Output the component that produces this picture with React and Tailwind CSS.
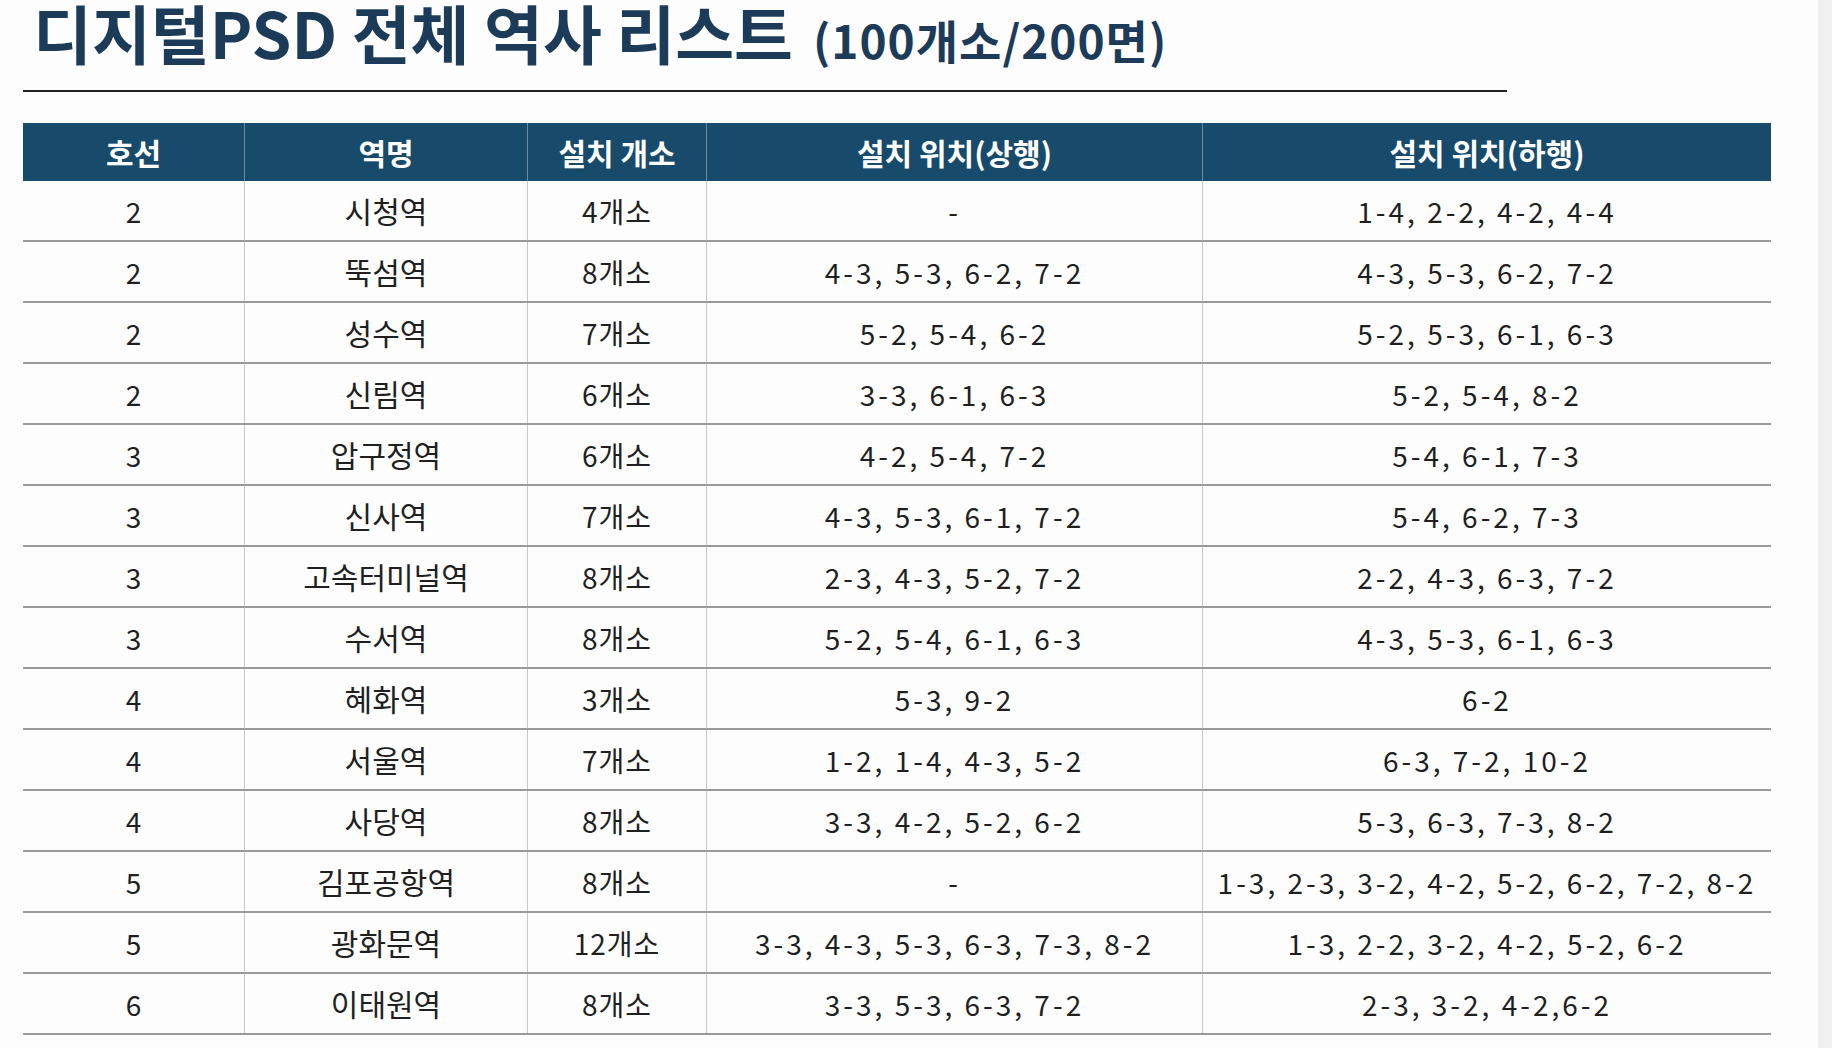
import React from 'react';

const rows = [
  ['2', '시청역', '4개소', '-', '1-4, 2-2, 4-2, 4-4'],
  ['2', '뚝섬역', '8개소', '4-3, 5-3, 6-2, 7-2', '4-3, 5-3, 6-2, 7-2'],
  ['2', '성수역', '7개소', '5-2, 5-4, 6-2', '5-2, 5-3, 6-1, 6-3'],
  ['2', '신림역', '6개소', '3-3, 6-1, 6-3', '5-2, 5-4, 8-2'],
  ['3', '압구정역', '6개소', '4-2, 5-4, 7-2', '5-4, 6-1, 7-3'],
  ['3', '신사역', '7개소', '4-3, 5-3, 6-1, 7-2', '5-4, 6-2, 7-3'],
  ['3', '고속터미널역', '8개소', '2-3, 4-3, 5-2, 7-2', '2-2, 4-3, 6-3, 7-2'],
  ['3', '수서역', '8개소', '5-2, 5-4, 6-1, 6-3', '4-3, 5-3, 6-1, 6-3'],
  ['4', '혜화역', '3개소', '5-3, 9-2', '6-2'],
  ['4', '서울역', '7개소', '1-2, 1-4, 4-3, 5-2', '6-3, 7-2, 10-2'],
  ['4', '사당역', '8개소', '3-3, 4-2, 5-2, 6-2', '5-3, 6-3, 7-3, 8-2'],
  ['5', '김포공항역', '8개소', '-', '1-3, 2-3, 3-2, 4-2, 5-2, 6-2, 7-2, 8-2'],
  ['5', '광화문역', '12개소', '3-3, 4-3, 5-3, 6-3, 7-3, 8-2', '1-3, 2-2, 3-2, 4-2, 5-2, 6-2'],
  ['6', '이태원역', '8개소', '3-3, 5-3, 6-3, 7-2', '2-3, 3-2, 4-2,6-2'],
];

const headers = ['호선', '역명', '설치 개소', '설치 위치(상행)', '설치 위치(하행)'];

const cols = 'grid grid-cols-[222px_283px_179px_496px_568px]';

// per-column text tweaks
const cellText = [
  'tracking-[3px] pl-[3px]',
  'text-[30px]',
  'tracking-[1px]',
  'tracking-[3px]',
  'tracking-[3px]',
];

const App = () => {
  return (
    <div
      className="flex w-[1832px] h-[1048px] overflow-hidden bg-[#fdfdfd]"
      style={{ fontFamily: '"Noto Sans CJK KR", "Noto Sans", sans-serif' }}
    >
      <div className="w-[1818px] pl-[23px]">
        {/* title */}
        <div className="w-[1484px] h-[92px] border-b-2 border-[#1e1e1e] flex items-start pl-[10px]">
          <h1 className="text-[#1b3b58] font-bold text-[64px] leading-[62px] whitespace-nowrap">
            디지털PSD 전체 역사 리스트
            <span className="text-[46px] ml-[20px] tracking-[1px]">(100개소/200면)</span>
          </h1>
        </div>

        <div className="mt-[31px] w-[1748px]">
          <div className={`${cols} h-[58px] bg-[#174a6b] text-white font-bold text-[30px]`}>
            {headers.map((h, i) => (
              <div
                key={h}
                className={`flex items-center justify-center ${i < 4 ? 'border-r border-[#6d8aa0]' : ''}`}
              >
                {h}
              </div>
            ))}
          </div>

          {rows.map((r, idx) => (
            <div key={idx} className={`${cols} h-[61px] border-b-2 border-[#9a9a9a] text-[#1f1f1f] text-[28px]`}>
              {r.map((c, i) => (
                <div
                  key={i}
                  className={`flex items-center justify-center whitespace-nowrap ${i < 4 ? 'border-r border-[#c8c8c8]' : ''} ${cellText[i]}`}
                >
                  {c}
                </div>
              ))}
            </div>
          ))}
        </div>
      </div>
      <div className="flex-1 bg-[#f0f0f0]" />
    </div>
  );
};

export default App;
